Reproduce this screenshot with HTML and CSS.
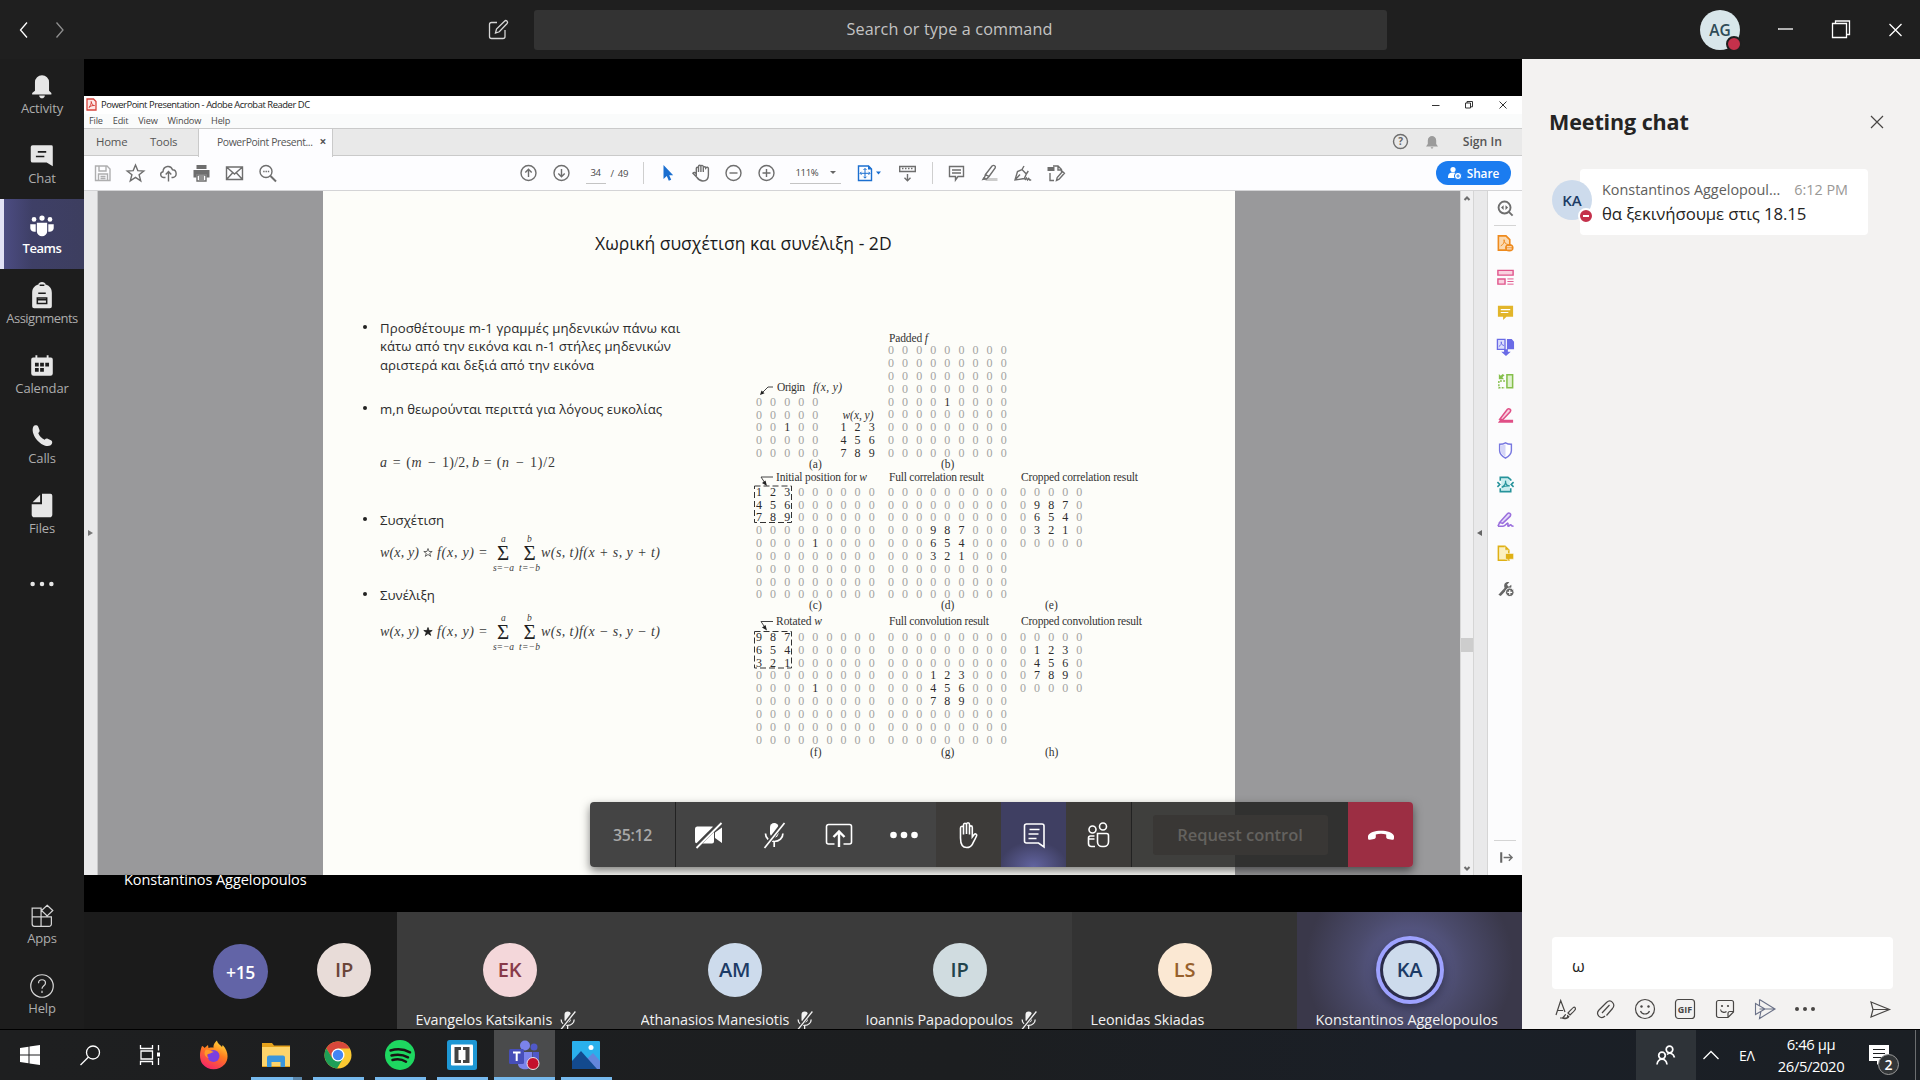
FILE: index.html
```html
<!DOCTYPE html>
<html lang="en">
<head>
<meta charset="utf-8">
<title>Meeting | Microsoft Teams</title>
<link rel="stylesheet" href="styles.css">
</head>
<body>
<svg class="defs" width="0" height="0">
  <defs>
    <symbol id="mic-off" viewBox="0 0 28 28">
      <rect x="10" y="2" width="8.5" height="14.5" rx="4.2" fill="currentColor"/>
      <path d="M5.500 12.500c0 4.500 3.500 8 8.700 8s8.700-3.500 8.700-8M14.200 20.500v5.500" fill="none" stroke="currentColor" stroke-width="1.700"/>
      <path d="M23.800 1.500L4.300 27" stroke="var(--cut)" stroke-width="4.500"/>
      <path d="M24.500 2L4.500 27" stroke="currentColor" stroke-width="1.700"/>
    </symbol>
  </defs>
</svg>

<header class="topbar">
  <div class="nav">
    <svg width="36" height="24" viewBox="0 0 36 24"><path d="M21 4.500l-6.500 7.500 6.500 7.500" class="ln w"/></svg>
    <svg width="36" height="24" viewBox="0 0 36 24"><path d="M14.500 4.500l6.500 7.500-6.500 7.500" class="ln g"/></svg>
  </div>
  <svg class="compose" width="24" height="24" viewBox="0 0 24 24"><path d="M11 4.500H5.500a2 2 0 0 0-2 2V18.500a2 2 0 0 0 2 2H17a2 2 0 0 0 2-2V12M9.500 15l1-4L18.500 3.200a1.500 1.500 0 0 1 2.600 2.300L13.300 13.800z" class="ln"/></svg>
  <div class="search">Search or type a command</div>
  <div class="me">AG<i></i></div>
  <div class="win">
    <svg width="55" height="30" viewBox="0 0 55 30"><path d="M20 14h15" class="ln w"/></svg>
    <svg width="55" height="30" viewBox="0 0 55 30"><path d="M19.500 8.500h14v14h-14zM22.500 8.500V6h14v13.500h-3" class="ln w"/></svg>
    <svg width="55" height="30" viewBox="0 0 55 30"><path d="M21.500 9l12 12M33.500 9l-12 12" class="ln w"/></svg>
  </div>
</header>

<div class="main">
  <nav class="rail">
    <a><svg viewBox="0 0 32 32"><path d="M8.500 21V12a7.500 7.500 0 0 1 15 0v9l2.500 2.500V25H5.500v-1.500zM13 26h6c0 4-6 4-6 0z" class="f"/></svg>Activity</a>
    <a><svg viewBox="0 0 32 32"><path d="M6 4.500h20a1.500 1.500 0 0 1 1.500 1.500V27L21 23H6a2 2 0 0 1-2-2V6.500a2 2 0 0 1 2-2z" class="f"/><path d="M11.500 11.500h9M9.500 16.500h9" stroke="#1d1d1d" stroke-width="1.800"/></svg>Chat</a>
    <a class="on"><svg viewBox="0 -1.5 32 32"><circle cx="16" cy="6" r="2.800"/><circle cx="7.500" cy="7.500" r="2.500"/><circle cx="24.500" cy="7.500" r="2.500"/><path d="M10.500 11h11v9a5.500 5.500 0 0 1-11 0zM3.500 12.500H9.300V20.500c-3 .8-5.800-1-5.800-3.500zM28.500 12.500h-5.800V20.500c3 .8 5.800-1 5.800-3.500z"/></svg>Teams</a>
    <a class="asg"><svg viewBox="0 -1 32 32"><path d="M5.500 11.500C5.500 5.500 10 3 12 3c.5-4 7.500-4 8 0 2 0 6.500 2.500 6.500 8.500V26a2 2 0 0 1-2 2h-17a2 2 0 0 1-2-2z" class="f"/><path d="M13.500 3.500h5M12 12h8" stroke="#1d1d1d" stroke-width="1.600"/><path d="M11 17h10v6H11zM11 19h10" fill="none" stroke="#1d1d1d" stroke-width="1.600"/></svg>Assignments</a>
    <a><svg viewBox="0 -1 32 32"><path d="M7.500 6h1.500V3.500h2V6h10V3.500h2V6h2.500a2 2 0 0 1 2 2v15a2.500 2.500 0 0 1-2.500 2.500h-18A2.500 2.500 0 0 1 4.500 23V8a2 2 0 0 1 2-2z" class="f"/><path d="M8.500 11.500h4v4h-4zM14 11.500h4v4h-4zM19.500 11.500h4v4h-4zM8.500 17h4v4h-4zM14 17h4v4h-4z" fill="#1d1d1d"/></svg>Calendar</a>
    <a><svg viewBox="0 0 32 32"><path d="M7 5.500c1-1 4-1.500 5 .5l1.300 3.500c.5 1.500-.3 2.500-1.300 3.300 1.200 3.500 3.700 5.800 6.800 7.200 1-1 2-1.600 3.300-1.100l3.400 1.600c2.500 1.300 1.300 4.500-.7 5.700C15.500 29.500 2.300 13.500 7 5.500z" class="f"/></svg>Calls</a>
    <a><svg viewBox="0 0 32 32"><path d="M16 3h9a2 2 0 0 1 2 2v20a3 3 0 0 1-3 3H8a3 3 0 0 1-3-3V14h11z" class="f"/><path d="M14 4v8H6z" class="f"/></svg>Files</a>
    <a class="dots"><svg viewBox="0 0 32 32"><circle cx="6" cy="16" r="2.400"/><circle cx="16" cy="16" r="2.400"/><circle cx="26" cy="16" r="2.400"/></svg></a>
    <span class="grow"></span>
    <a><svg viewBox="0 0 32 32"><path d="M5.500 7.500H15v9.500H5.500zM5.500 17H15v10H8a2.500 2.500 0 0 1-2.500-2.500zM15 17h11v7.500a2.500 2.500 0 0 1-2.500 2.500H15zM21.500 4.500l6 5.700-6 5.700-6-5.700z" class="ln"/></svg>Apps</a>
    <a><svg viewBox="0 0 32 32"><circle cx="16" cy="16" r="12" class="ln"/><path d="M12.300 13c0-5 7.400-4.700 7.400-.3 0 3-3.700 3-3.700 6.300M16 21v2.500" class="ln"/></svg>Help</a>
  </nav>

  <section class="stage">
    <div class="acrobat">
      <div class="a-title">
        <svg width="11" height="13" viewBox="0 0 11 13"><path d="M1 1h6.500L10 3.500V12H1z" fill="#fde8e6" stroke="#d8443c" stroke-width="1.300"/><path d="M3 9.500C5 7 5.500 5 5.200 3.500 5.500 6 7 7.500 8.500 7.500 6.500 7.300 4.500 8 3 9.500z" fill="none" stroke="#d8443c"/></svg>
        <span class="t">PowerPoint Presentation - Adobe Acrobat Reader DC</span>
        <svg class="ctl" width="102" height="14" viewBox="0 0 102 14"><path d="M13 7.500h7.500M46.500 5h5v5h-5zM48 5V3.500h5.500v5.300H51.500M80.500 3.500l7 7M87.500 3.500l-7 7" fill="none" stroke="#333"/></svg>
      </div>
      <div class="a-menu"><span>File</span><span>Edit</span><span>View</span><span>Window</span><span>Help</span></div>
      <div class="a-tabs">
        <span class="home">Home</span><span class="tools">Tools</span>
        <span class="tab">PowerPoint Present...<b>×</b></span>
        <span class="grow"></span>
        <svg width="17" height="17" viewBox="0 0 17 17"><circle cx="8.500" cy="8.500" r="7" class="k"/><text x="8.500" y="12.200" class="q">?</text></svg>
        <svg class="bell" width="14" height="16" viewBox="0 0 14 16"><path d="M1 12.500l1.800-2.500V6.500C2.800 3.500 5 2 7 2s4.200 1.500 4.200 4.500V10L13 12.500zM5.500 13.300h3L7 15z" fill="#9b9b9b"/></svg>
        <span class="sign">Sign In</span>
      </div>
      <div class="a-tools">
        <svg class="ib" viewBox="0 0 33 24"><path d="M9.500 5h11.500l3 3v11.500h-14.500zM13 5v5h7V5M12.500 19v-6h9v6M14.500 15.500h5M14.500 17.500h5" class="k faint"/></svg>
        <svg class="ib" viewBox="0 0 33 24"><path d="M16.500 4l2.300 5.600 6 .4-4.700 3.800 1.600 6-5.200-3.400-5.200 3.400 1.600-6L8.200 10l6-.4z" class="k"/></svg>
        <svg class="ib" viewBox="0 0 33 24"><path d="M13.500 16.500h-2c-3.500-.5-3.800-5-.5-5.700.3-6.300 8-7 9.500-2 4.500 0 5 7 .5 7.700h-1.500M16.500 20.500v-9M13.700 13.500l2.800-3 2.800 3" class="k"/></svg>
        <svg class="ib" viewBox="0 0 33 24"><path d="M11.500 4h10v4h-10zM8.500 9h16v7.500h-3v-3h-10v3h-3z" fill="#6e6e6e"/><path d="M12 14h9v6h-9zM14 16h5M14 18h5" class="k"/></svg>
        <svg class="ib" viewBox="0 0 33 24"><path d="M8.500 6h16v12.500h-16zM8.500 6l8 7 8-7M8.500 18.500l6-6.500M24.500 18.500l-6-6.500" class="k"/></svg>
        <svg class="ib" viewBox="0 0 33 24"><circle cx="15" cy="10.500" r="6" class="k"/><path d="M19.500 15l5.500 5.500" class="k b"/><path d="M12.200 10.500h1.400M14.500 10.500h1.400M16.800 10.500h1.400" class="k"/></svg>
        <svg class="ib up" viewBox="0 0 33 24"><circle cx="16.500" cy="12" r="7.500" class="k"/><path d="M16.500 16V8.500M13.300 11.500l3.200-3.300 3.200 3.300" class="k"/></svg>
        <svg class="ib" viewBox="0 0 33 24"><circle cx="16.500" cy="12" r="7.500" class="k"/><path d="M16.500 8v7.500M13.300 12.500l3.200 3.300 3.200-3.300" class="k"/></svg>
        <span class="field pg">34</span><span class="of">/&nbsp; 49</span>
        <i class="sep"></i>
        <svg class="ib" viewBox="0 0 33 24"><path d="M12.500 4v14l3.300-3 2 4.800 2.400-1-2-4.600h4z" fill="#1b6fd0"/></svg>
        <svg class="ib" viewBox="0 0 33 24"><path d="M12.300 15V7.500c0-1.700 2.200-1.700 2.200 0M14.500 11V5.500c0-1.700 2.400-1.700 2.400 0V11M16.900 11V5.500c0-1.700 2.400-1.300 2.400.3V11M19.300 11V6.800c0-1.500 2.400-1.400 2.400.2 1-1.300 2.700-1 2.700.5V14c0 3.500-2 6-5.500 6-3.300 0-4.500-1.500-5.900-3.500L8.900 12.200c1-1.200 2.300-.8 3.400.8" class="k"/></svg>
        <svg class="ib" viewBox="0 0 33 24"><circle cx="16.500" cy="12" r="7.500" class="k"/><path d="M12.500 12h8" class="k"/></svg>
        <svg class="ib" viewBox="0 0 33 24"><circle cx="16.500" cy="12" r="7.500" class="k"/><path d="M12.500 12h8M16.500 8v8" class="k"/></svg>
        <span class="field zm">111%<b></b></span>
        <svg class="ib fit" viewBox="0 0 33 24"><path d="M9.500 5h10l3 3v11.500h-13z" fill="none" stroke="#1b6fd0" stroke-width="1.400"/><path d="M19 4.500v4h4zM27 10.500h5l-2.500 3z" fill="#1b6fd0"/><path d="M16 7.500v9.500M11.300 12.300h9.500M14.500 9L16 7.500 17.500 9M14.500 15.700L16 17.200l1.500-1.500M12.500 10.800L11 12.300l1.500 1.500M19.500 10.800l1.500 1.500-1.500 1.500" fill="none" stroke="#1b6fd0"/></svg>
        <svg class="ib rul" viewBox="0 0 33 24"><path d="M8.700 5.500h15.600v5H8.700zM16.500 13v6.500M13.500 16.800l3 3 3-3" class="k"/><path d="M11 7.500h11" class="k" stroke-dasharray="1.500 1.500"/></svg>
        <i class="sep s2"></i>
        <svg class="ib" viewBox="0 0 33 24"><path d="M9.500 5.500h14v10h-5.500l-2.500 3.500v-3.500h-6zM12 9h9M12 12h9" class="k"/></svg>
        <svg class="ib" viewBox="0 0 33 24"><path d="M12.500 17h12v3h-12z" fill="#ccc"/><path d="M12.500 13.500l6.500-8.500c2-1.500 4 .3 3.200 2l-6.200 8.500zM12.500 13.500l-1.500 4.500h2.500l2.500-2.500" class="k"/><path d="M8.500 19.500l2-3.500 3 2z" fill="#6e6e6e"/></svg>
        <svg class="ib" viewBox="0 0 33 24"><path d="M9 19l2.500-8.500 4.500-2 4.300 4.500-2 4.500zM9 19l5-5.500M16 8.500l2-3.500M20.300 13l2-3M19 19l1.500-2 1 2 1.200-1.500 1 1.500h1.500" class="k"/></svg>
        <svg class="ib" viewBox="0 0 33 24"><path d="M8.500 6h7v4h-7z" fill="#6e6e6e"/><path d="M14 5h5l3.500 3.500M19 5v4h3.500v3M11 12v7.500h4M17.500 19.500l.7-3 5.300-6 1.900 1.700-5.300 6z" class="k"/></svg>
        <span class="share"><svg width="14" height="14" viewBox="0 0 14 14"><circle cx="5" cy="3.500" r="2.600" fill="#fff"/><path d="M0 12c0-5 2-5.500 5-5.500 2 0 3 .5 3.500 1.500L7 12z" fill="#fff"/><circle cx="10" cy="10" r="3.600" fill="#fff" stroke="#1b7cf0"/><path d="M8.300 10h3.400M10 8.300v3.400" stroke="#1b7cf0"/></svg>Share</span>
      </div>
      <div class="a-body">
        <div class="fold"><i></i></div>
        <div class="desk">
          <article class="slide">
            <h1>Χωρική συσχέτιση και συνέλιξη - 2D</h1>
            <div class="cols">
              <ul>
                <li class="p1"><span class="l1">Προσθέτουμε m-1 γραμμές μηδενικών πάνω και</span><br><span>κάτω από την εικόνα και n-1 στήλες μηδενικών</span><br>αριστερά και δεξιά από την εικόνα</li>
                <li class="p2">m,n θεωρούνται περιττά για λόγους ευκολίας</li>
                <li class="eq m1"><svg width="200" height="24"><text x="0" y="17" textLength="31"><tspan class="it">a</tspan> = (</text><text x="31.500" y="17" class="it">m</text><text x="48" y="17">−</text><text x="62" y="17" textLength="27">1)/2,</text><text x="92" y="17" textLength="37"><tspan class="it">b</tspan> = (<tspan class="it">n</tspan></text><text x="136" y="17">−</text><text x="150" y="17" textLength="25">1)/2</text></svg></li>
                <li class="p3">Συσχέτιση</li>
                <li class="eq"><svg width="290" height="45"><g class="it"><text x="0" y="27" textLength="39">w(x, y)</text><text x="57" y="27" textLength="37">f(x, y)</text><text x="161" y="27" textLength="119">w(s, t)f(x + s, y + t)</text></g><text x="99" y="27">=</text><path d="M48 18.500l1.100 3h3.100l-2.500 1.900 1 3-2.700-1.900-2.700 1.900 1-3-2.500-1.900h3.100z" fill="none" stroke="#444" stroke-width=".8"/><g class="sg"><text x="117" y="30">Σ</text><text x="143.500" y="30">Σ</text></g><g class="it sm"><text x="121" y="12">a</text><text x="147" y="12">b</text><text x="113" y="41" textLength="21">s=−a</text><text x="139" y="41" textLength="21">t=−b</text></g></svg></li>
                <li class="p4">Συνέλιξη</li>
                <li class="eq m3"><svg width="290" height="45"><g class="it"><text x="0" y="27" textLength="39">w(x, y)</text><text x="57" y="27" textLength="37">f(x, y)</text><text x="161" y="27" textLength="119">w(s, t)f(x − s, y − t)</text></g><text x="99" y="27">=</text><path d="M48 18.500l1.100 3h3.100l-2.500 1.900 1 3-2.700-1.900-2.700 1.900 1-3-2.500-1.900h3.100z" fill="#222" stroke="#222" stroke-width=".8"/><g class="sg"><text x="117" y="30">Σ</text><text x="143.500" y="30">Σ</text></g><g class="it sm"><text x="121" y="12">a</text><text x="147" y="12">b</text><text x="113" y="41" textLength="21">s=−a</text><text x="139" y="41" textLength="21">t=−b</text></g></svg></li>
              </ul>
              <svg class="fig" id="fig" width="420" height="460" viewBox="0 0 420 460">
                <g class="lab">
                  <text x="149" y="32" textLength="39">Padded <tspan class="it">f</tspan></text>
                  <text x="37" y="81" textLength="28">Origin</text><text x="73" y="81" textLength="29" class="it">f(x, y)</text>
                  <text x="102.500" y="109" textLength="31" class="it">w(x, y)</text>
                  <text x="69" y="158">(a)</text><text x="201" y="158">(b)</text>
                  <text x="36" y="171" textLength="91">Initial position for <tspan class="it">w</tspan></text>
                  <text x="149" y="171" textLength="95">Full correlation result</text>
                  <text x="281" y="171" textLength="117">Cropped correlation result</text>
                  <text x="69" y="299">(c)</text><text x="201" y="299">(d)</text><text x="305" y="299">(e)</text>
                  <text x="36" y="315" textLength="46">Rotated <tspan class="it">w</tspan></text>
                  <text x="149" y="315" textLength="100">Full convolution result</text>
                  <text x="281" y="315" textLength="121">Cropped convolution result</text>
                  <text x="70" y="446">(f)</text><text x="201" y="446">(g)</text><text x="305" y="446">(h)</text>
                </g>
                <path d="M33 77h-5l-6 6M33 167H21l4 6M33 311.500H21l4 6" fill="none" stroke="#444"/>
                <path d="M20 85l1.500-4.500 3 2.800zM27 176l-5-3 3.500-2.500zM27 320.500l-5-3 3.500-2.500z" fill="#222"/>
                <path d="M14.500 176h37v36.500h-37zM14.500 321.500h37V358h-37z" fill="none" stroke="#333" stroke-dasharray="6 3"/>
              </svg>
            </div>
          </article>
        </div>
        <div class="sb"><svg width="12" height="12" viewBox="0 0 12 12"><path d="M3.500 8L6 5.500 8.500 8" class="k b"/></svg><i></i><svg width="12" height="12" viewBox="0 0 12 12"><path d="M3.500 5L6 7.500 8.500 5" class="k b"/></svg></div>
        <div class="fold r"><i></i></div>
        <div class="side">
          <svg viewBox="0 0 20 20"><circle cx="9" cy="9" r="6.300" class="k b"/><path d="M13.500 13.500l4 4" class="k b"/><path d="M8 6.500v5L5.300 9zM10 6.500v5L12.700 9z" fill="#666"/></svg>
          <hr>
          <svg viewBox="0 0 20 20"><path d="M2.500 2h8l4 4v11h-12z" fill="#fbd9b0" stroke="#ee8a1d" stroke-width="1.700"/><path d="M5 12.500c3-1.500 4-4 3.500-6.500 0 3 1.500 4.500 4 5" fill="none" stroke="#ee8a1d"/><ellipse cx="14" cy="14.500" rx="4.500" ry="4" fill="#ee8a1d"/><path d="M11.500 13.500h5M11.500 15.700h5" stroke="#fff"/></svg>
          <svg viewBox="0 0 20 20"><path d="M2 2.500h16v5H2zM2 11.500h7.500v5.500H2z" fill="#f9d2e0" stroke="#e0558c" stroke-width="1.500"/><path d="M12 11.500h6.500M12 14.200h6.500M12 17h6.500" stroke="#e0558c"/></svg>
          <svg viewBox="0 0 20 20"><path d="M2 3h16v11.500h-7L7.500 18v-3.500H2z" fill="#e2b52a"/><path d="M5 7h10M5 10h8" stroke="#fff" stroke-width="1.200"/></svg>
          <svg viewBox="0 0 20 20"><path d="M1.500 2.500h8v10.500h-8z" fill="#dddffc" stroke="#6a6be6" stroke-width="1.400"/><path d="M11.500 2h5l2.500 3v8h-7.500zM8.500 13h4v2.500h3L10.500 20l-5-4.500h3z" fill="#6a6be6"/><path d="M3 10c2-1 3-3 2.500-5 0 2.500 1 3.500 3 4" fill="none" stroke="#6a6be6"/></svg>
          <svg viewBox="0 0 20 20"><path d="M11.500 3h6v13.500h-6z" fill="#e0f2d0" stroke="#85bf4b" stroke-width="1.600"/><path d="M9.500 9.500H3v7h6.500" fill="none" stroke="#85bf4b" stroke-width="1.500" stroke-dasharray="2 1.300"/><path d="M3 2v5.500h5.500L6.700 5.600 9 3.500 7 2 5 4z" fill="#85bf4b"/></svg>
          <svg viewBox="0 0 20 20"><path d="M4 14l8-10.500c1.500-1.500 4.500 0 3 2.500L7 14.500z" fill="#f9d2e0" stroke="#e04f86" stroke-width="1.600"/><path d="M2 17.500l3-4 3 1h10v3z" fill="#e04f86"/></svg>
          <svg viewBox="0 0 20 20"><path d="M10 2c2 1.200 4 1.500 6.200 1.500V10c0 4-3 6.300-6.200 8-3.200-1.700-6.200-4-6.200-8V3.500C6 3.500 8 3.200 10 2z" fill="#fff" stroke="#7878e0" stroke-width="1.500"/><path d="M10 3.500v13c-3-1.500-5-3.500-5-6.500V4.700c2 0 3.500-.4 5-1.200z" fill="#d5d6f7"/></svg>
          <svg viewBox="0 0 20 20"><path d="M5.500 3.500h7l2 2v11h-9z" fill="#c9edef"/><path d="M4.500 6V2.500h8L15.500 5v1M15.500 14v3.500h-11V14M1.500 7.500L4 10l-2.500 2.500M18.500 7.500L16 10l2.500 2.500" fill="none" stroke="#26939b" stroke-width="1.700"/><path d="M6 13c3-1.500 4.500-4 4-7 0 4 2 5.500 4.500 5.500-3-.2-6 .2-8.500 1.500z" fill="none" stroke="#26939b" stroke-width="1.300"/></svg>
          <svg viewBox="0 0 20 20"><path d="M4 13l8-9c1.500-1.500 4.500-.5 3 2.500L7 14z" fill="#e6dbfb" stroke="#9a6fdd" stroke-width="1.600"/><path d="M2 17h5.500c3 0 4-4 5-3s-1 3 .5 3 1.500-2 2.500-1.500 0 1.500 3 1.500M2 17l2-4" fill="none" stroke="#9a6fdd" stroke-width="1.600"/></svg>
          <svg viewBox="0 0 20 20"><path d="M2.500 2.500h7l4 4v10.500h-11z" fill="#fbf0c0" stroke="#dfb015" stroke-width="1.600"/><path d="M9.500 2.500v4h4M10 10h8.500v6h-4L12 18v-2h-2z" fill="#dfb015" stroke="#fff" stroke-width=".5"/></svg>
          <svg viewBox="0 0 20 20"><path d="M2.500 16.500L9 9.500C7.500 5 10.500 2.500 14 3.500L11.500 6l2 2.200L16 6c1 3-1 5.500-4.500 5L5 18z" fill="#666"/><circle cx="14.500" cy="14" r="4.500" fill="#666" stroke="#fff"/><path d="M12 14h5M14.500 11.500v5" stroke="#fff" stroke-width="1.300"/></svg>
          <span class="grow"></span>
          <hr>
          <svg class="last" viewBox="0 0 20 20"><path d="M5.500 4.500v11" stroke="#666" stroke-width="2.200"/><path d="M8 10h9M13.500 6.500l3.500 3.500-3.500 3.500" class="k"/></svg>
        </div>
      </div>
    </div>
    <div class="caller">Konstantinos Aggelopoulos</div>

    <div class="strip">
      <div class="over"><span class="av more">+15</span><span class="av ip1">IP</span></div>
      <div class="tile"><span class="av ek">EK</span><p>Evangelos Katsikanis<svg width="21" height="21"><use href="#mic-off"/></svg></p></div>
      <div class="tile"><span class="av am">AM</span><p>Athanasios Manesiotis<svg width="21" height="21"><use href="#mic-off"/></svg></p></div>
      <div class="tile"><span class="av ip2">IP</span><p>Ioannis Papadopoulos<svg width="21" height="21"><use href="#mic-off"/></svg></p></div>
      <div class="tile dim"><span class="av ls">LS</span><p>Leonidas Skiadas</p></div>
      <div class="tile talk"><span class="av ka">KA</span><p>Konstantinos Aggelopoulos</p></div>
    </div>

    <div class="callbar">
      <span class="time">35:12</span>
      <span class="cb"><svg viewBox="0 0 28 28"><path d="M2 5.500h15a2 2 0 0 1 2 2v13a2 2 0 0 1-2 2H2.500a2.500 2.500 0 0 1-2.500-2.500v-12a2.500 2.500 0 0 1 2-2.500zM20 11.500l7-5v15.500l-7-5z" fill="#fff"/><path d="M25.500 1.500L1 26" stroke="#444" stroke-width="4.500"/><path d="M26.500 2L1.500 27" stroke="#fff" stroke-width="1.800"/></svg></span>
      <span class="cb m"><svg><use href="#mic-off"/></svg></span>
      <span class="cb"><svg viewBox="0 0 28 28"><path d="M9.500 23H3.500a2 2 0 0 1-2-2V5.500a2 2 0 0 1 2-2h21a2 2 0 0 1 2 2V21a2 2 0 0 1-2 2h-6" fill="none" stroke="#fff" stroke-width="1.600"/><path d="M14 26V11M8.500 16L14 10.500 19.500 16" fill="none" stroke="#fff" stroke-width="2.400"/></svg></span>
      <span class="cb"><svg viewBox="0 0 28 28"><circle cx="3.500" cy="14" r="3.300" fill="#fff"/><circle cx="14" cy="14" r="3.300" fill="#fff"/><circle cx="24.500" cy="14" r="3.300" fill="#fff"/></svg></span>
      <span class="cb d"><svg viewBox="3 0 28 28"><path d="M8.500 17V7c0-2.300 3-2.300 3 0v6.500V4c0-2.300 3-2.300 3 0v9V3.500c0-2.300 3-2.300 3 0V13.500V6.500c0-2.200 2.800-2.200 2.800 0V16l1.900-2.500c1.300-1.300 3 0 2.400 1.300-1.200 3-3 6-4 8-1.500 3-3.400 3.700-5.900 3.700-4.700 0-6.200-4-6.200-9.500z" fill="none" stroke="#fff" stroke-width="1.600"/></svg></span>
      <span class="cb c"><svg viewBox="0 0 28 28"><path d="M6 3h16a2 2 0 0 1 2 2v21l-5.500-4H6.500a2 2 0 0 1-2-2V5a2 2 0 0 1 2-2zM9.500 8.500h10M8.500 13h10M8.500 17.500h8" fill="none" stroke="#fff" stroke-width="1.600"/></svg></span>
      <span class="cb d"><svg viewBox="1 0 28 28"><circle cx="8.500" cy="8.500" r="3.500" class="o"/><circle cx="19" cy="5.500" r="3.500" class="o"/><path d="M13.500 12.500h9a2 2 0 0 1 2 2V21a4.500 4.500 0 0 1-4.500 4.500h-2a4.500 4.500 0 0 1-4.500-4.500zM10.500 15h-4a2 2 0 0 0-2 2v1h6M4.500 18v4.500a3 3 0 0 0 3 3H11" class="o"/></svg></span>
      <span class="req"><b>Request control</b></span>
      <span class="end"><svg viewBox="0 0 28 28"><path d="M1 15C3 8 25 8 27 15v2c0 1.500-.8 2-2 1.800l-4-.8c-1.200-.2-1.800-1-1.800-2v-2.500c-3-1-7.400-1-10.400 0V16c0 1-.6 1.800-1.800 2l-4 .8C1.800 19 1 18.500 1 17z" fill="#fff"/></svg></span>
    </div>
  </section>

  <aside class="chat">
    <div class="c-head"><h2>Meeting chat</h2><svg width="14" height="14" viewBox="0 0 14 14"><path d="M1 1l12 12M13 1L1 13" class="ln d"/></svg></div>
    <div class="msg">
      <span class="who">KA<i></i></span>
      <div class="card"><div class="meta"><span>Konstantinos Aggelopoul...</span><time>6:12 PM</time></div><p>θα ξεκινήσουμε στις 18.15</p></div>
    </div>
    <span class="grow"></span>
    <div class="input">ω</div>
    <div class="acts">
      <svg viewBox="0 0 24 24"><path d="M3 18L7.700 3.500 12 15M4.500 13.500h5.500M7 21h6c1.500 0 2-1.500 1.500-3M22 10.500c-1-1-1.500-.5-7 5.500l2 2c6-5.500 6-6 5-7.500zM13 17.500c-2 .5-1.500 3-4 3.500 3 1.500 6.500 0 7-2" class="ln d"/></svg>
      <svg viewBox="0 0 24 24"><path d="M13.500 18.500l6-7c3.500-4.500-1.500-10-6-6L6 13c-4 4.500 2 10.500 6 6M9 16l7.500-8" class="ln d"/></svg>
      <svg viewBox="0 0 24 24"><circle cx="12" cy="12" r="9.500" class="ln d"/><path d="M7.500 14c1.500 4 7.500 4 9 0" class="ln d"/><circle cx="8.500" cy="9.500" r="1.200"/><circle cx="15.500" cy="9.500" r="1.200"/></svg>
      <svg viewBox="0 0 24 24"><rect x="2.500" y="2.500" width="19" height="19" rx="3" class="ln d"/><text x="12" y="15.500" class="gif">GIF</text></svg>
      <svg viewBox="0 0 24 24"><path d="M5.500 3.500h13a2 2 0 0 1 2 2V15L15 20.500H5.500a2 2 0 0 1-2-2v-13a2 2 0 0 1 2-2zM20.500 14.500H17a2 2 0 0 0-2 2v4M7.500 12.500c.5 3 4 3.500 6 2" class="ln d"/><circle cx="9" cy="9" r="1.100"/><circle cx="15" cy="9" r="1.100"/></svg>
      <svg viewBox="0 0 24 24"><path d="M6.500 2.500L22 12 6.500 21.500l1.500-7.500M6.500 2.500V9M6.500 12H22M2.500 6.500L12 12l-9.500 5.500v-11z" class="ln p"/></svg>
      <svg viewBox="0 0 24 24"><circle cx="4" cy="12" r="2"/><circle cx="12" cy="12" r="2"/><circle cx="20" cy="12" r="2"/></svg>
      <span class="grow"></span>
      <svg viewBox="0 0 24 24"><path d="M3 5l18.500 7.500L3 20l2-7.500zM5 12.500h16" class="ln d"/></svg>
    </div>
  </aside>
</div>

<footer class="taskbar">
  <span class="tb s"><svg width="20" height="20" viewBox="0 0 20 20"><path d="M0 3l8.500-1.200v7.700H0zM9.500 1.600L20 0v9.500H9.500zM0 10.500h8.500v7.700L0 17zM9.500 10.500H20V20L9.500 18.400z" fill="#fff"/></svg></span>
  <span class="tb s"><svg width="22" height="22" viewBox="0 0 22 22"><circle cx="14" cy="8.500" r="6.500" class="ln w"/><path d="M9.500 13L1.500 21" class="ln w"/></svg></span>
  <span class="tb s"><svg width="22" height="22" viewBox="0 0 22 22"><path d="M1.500 1v3.500h12V1M1.500 21v-3.500h12V21M2 7h11.500v8H2zM19.500 1v5.500M19.500 14v7" class="ln w"/><path d="M18 8.500h3v4h-3z" fill="#fff"/></svg></span>
  <span class="tb ff"><svg width="30" height="30" viewBox="0 0 30 30"><defs><linearGradient id="fg" x1=".8" y1="0" x2=".3" y2="1"><stop offset="0" stop-color="#ffe23c"/><stop offset=".45" stop-color="#ff7a1f"/><stop offset="1" stop-color="#f5236a"/></linearGradient></defs><path d="M3 6c1 0 2 1 2.500 2L9 5l.5 3c2-.5 4-.5 5-.3C14 5 16 2 18 .5c.3 3 3.500 4.500 5 6.500l.7-2C30 12 29.500 19 26 24c-6 7-17 7-22.500 0C0 19 .5 12 3 6z" fill="url(#fg)"/><circle cx="14.500" cy="16" r="6" fill="#7a3fe0"/><path d="M7 9.500c3 0 5 1.500 8 2.500-3 .5-4 2-6 2s-1 3 1 4c-4-.5-6-5-3-8.500z" fill="#ff9a2a"/></svg></span>
  <span class="tb run two"><svg width="28" height="28" viewBox="0 0 28 28"><path d="M0 2h10l2 2.500h16V26H0z" fill="#e5a21c"/><path d="M0 6h28v19H0z" fill="#fdd46b"/><path d="M5 26v-9.500a2 2 0 0 1 2-2h14a2 2 0 0 1 2 2V26h-4.500v-5h-9v5z" fill="#3a96dd"/></svg></span>
  <span class="tb run"><svg width="28" height="28" viewBox="0 0 28 28"><circle cx="14" cy="14" r="13.500" fill="#fbc932"/><path d="M2.300 7.200A13.500 13.500 0 0 1 25.700 7.500H14L8 17z" fill="#d9483b"/><path d="M2.300 7.200A13.500 13.500 0 0 0 13 27.500L19 17.500 8.500 17.500z" fill="#1e9f57"/><circle cx="14" cy="14" r="6.500" fill="#fff"/><circle cx="14" cy="14" r="5.200" fill="#4285f4"/></svg></span>
  <span class="tb run"><svg width="30" height="30" viewBox="0 0 30 30"><circle cx="15" cy="15" r="15" fill="#1ed760"/><path d="M5.500 10.500c7-2 14-1.200 19.500 1.800M6.500 15.500c6-1.500 11.500-1 16.500 1.800M7.500 20c5-1.200 9.500-.8 13.500 1.700" fill="none" stroke="#191414" stroke-width="2.500" stroke-linecap="round"/></svg></span>
  <span class="tb run"><svg width="30" height="30" viewBox="0 0 30 30"><rect width="30" height="30" rx="2.500" fill="#1e97d4"/><rect x="4" y="4.500" width="22" height="21" rx="1" fill="#fff"/><path d="M14 7H7.500v16H14v-3h-2.500V10H14zM16 7h6.500v16H16v-3h2.500V10H16z" fill="#444"/></svg></span>
  <span class="tb run act"><svg width="32" height="30" viewBox="0 0 32 30"><circle cx="17" cy="5.500" r="5" fill="#7b83eb"/><circle cx="26" cy="7" r="3.500" fill="#5059c9"/><path d="M10 12h14v12c0 7-14 7-14 0z" fill="#7b83eb"/><path d="M24.500 12H31v9c0 3-3 5-6.500 4z" fill="#5059c9"/><rect x="1" y="9" width="15" height="15" rx="1.500" fill="#464eb8"/><path d="M5 12.500h7.500M8.700 12.500v8.500" stroke="#fff" stroke-width="2"/><circle cx="25" cy="23.500" r="6" fill="#c4112d" stroke="#e8e8e8"/></svg></span>
  <span class="tb run"><svg width="28" height="28" viewBox="0 0 28 28"><rect width="28" height="28" rx="1" fill="#2ab0ec"/><path d="M12 21l9-9 7 8v8H12z" fill="#6486dc"/><path d="M0 20l9-10 16 18H0z" fill="#134a8e"/><circle cx="19" cy="6.500" r="2.500" fill="#fff"/></svg></span>
  <span class="grow"></span>
  <span class="ppl"><svg width="20" height="20" viewBox="0 0 20 20"><circle cx="13.500" cy="4.500" r="3.300" class="ln w2"/><circle cx="6" cy="10.500" r="3.300" class="ln w2"/><path d="M1 19.500c1-7 9-7 10 0M11 9.500c2.500-2.500 6.500-1 7.500 3" class="ln w2"/></svg></span>
  <svg class="chev" width="16" height="10" viewBox="0 0 16 10"><path d="M.5 9L8 1.500 15.500 9" class="ln w"/></svg>
  <span class="lang">ΕΛ</span>
  <span class="clock"><span>6:46 μμ</span><span>26/5/2020</span></span>
  <span class="notif"><svg width="20" height="20" viewBox="0 0 20 20"><path d="M0 0h20v16h-8l-4 4v-4H0z" fill="#fff"/><path d="M4 4.500h12M4 8.500h12M4 12.500h9" stroke="#1c1e20"/></svg><i>2</i></span>
  <i class="edge"></i>
</footer>
<script src="figure.js"></script>
</body>
</html>
```
FILE: styles.css
```css
* { box-sizing: border-box; }
body { margin: 0; width: 1920px; height: 1080px; overflow: hidden; display: flex; flex-direction: column; background: #000; font-family: "Open Sans", "Noto Sans", sans-serif; }
h1, h2, p, ul { margin: 0; padding: 0; font-weight: 400; }
.defs { position: absolute; }
.grow { flex: 1; }
i { font-style: normal; }
svg { flex: none; display: block; }
.ln { fill: none; stroke: #d6d6d6; stroke-width: 1.3; }
.ln.w { stroke: #fff; }
.ln.w2 { stroke: #fff; stroke-width: 1.7; }
.ln.g { stroke: #8f8f8f; }
.ln.d { stroke: #484644; stroke-width: 1.2; }
.ln.p { stroke: #6b7288; stroke-width: 1.1; }
.k { fill: none; stroke: #6e6e6e; stroke-width: 1.4; }
.k.b { stroke-width: 2; }
.k.faint { opacity: .55; }

/* top bar */
.topbar { height: 59px; flex: none; display: flex; align-items: center; background: #1f1f1f; color: #c8c8c8; overflow: hidden; }
.topbar > * { flex: none; }
.nav { display: flex; padding-left: 6px; width: 486px; }
.compose { margin-right: 24px; }
.search { width: 853px; height: 40px; background: #333; border-radius: 3px; font-size: 16.2px; line-height: 39px; text-align: center; padding-right: 22px; letter-spacing: .15px; color: #c4c4c4; }
.me { position: relative; width: 40px; height: 40px; margin-left: 313px; border-radius: 50%; background: #d8e6ea; color: #2f4b57; font-size: 15.5px; font-weight: 600; line-height: 40px; text-align: center; }
.me i { position: absolute; right: -2px; bottom: -2px; width: 16px; height: 16px; border-radius: 50%; background: #c4314b; border: 2px solid #1f1f1f; }
.win { display: flex; margin-left: 17.5px; }

.main { height: 970px; flex: none; display: flex; }

/* app rail */
.rail { width: 84px; flex: none; display: flex; flex-direction: column; background: #1d1d1d; }
.rail a { height: 70px; flex: none; display: flex; flex-direction: column; align-items: center; padding-top: 12px; font-size: 13px; line-height: 18px; letter-spacing: -.15px; color: #adadad; }
.rail svg { width: 30px; height: 30px; fill: #e6e6e6; margin-bottom: -2px; }
.rail .ln { fill: none; }
.rail .asg { letter-spacing: -.5px; }
.rail .dots { padding-top: 20px; }
.rail .on { color: #fff; font-weight: 600; letter-spacing: -.4px; border-left: 4px solid #e2e2f6; padding-right: 4px; background: linear-gradient(90deg, #4c4c82, #3e3f66 35%, #3d3e5f); }
.rail .on svg { fill: #fff; }

/* shared window */
.stage { position: relative; width: 1438px; flex: none; background: #000; padding-top: 37px; display: flex; flex-direction: column; }
.acrobat { height: 779px; flex: none; background: #fdfdff; color: #4a4a4a; display: flex; flex-direction: column; }
.a-title { height: 18px; display: flex; align-items: center; padding-left: 2px; font-size: 9.4px; color: #222; letter-spacing: -.44px; background: #fff; line-height: 16px; padding-bottom: 1px; }
.a-title .t { margin-left: 4px; }
.ctl { margin-left: auto; margin-right: 1px; }
.a-menu { height: 14px; display: flex; padding-left: 5px; font-size: 9.2px; line-height: 13px; letter-spacing: -.2px; background: #fafbfb; }
.a-menu span { margin-right: 10px; }
.a-tabs { height: 28px; display: flex; align-items: center; border: solid #cacaca; border-width: 1px 0; background: #e9e9e9; font-size: 11.4px; line-height: 24px; letter-spacing: -.2px; padding-right: 20px; padding-bottom: 1px; color: #555; }
.home { width: 66px; padding-left: 12px; }
.tools { width: 48px; }
.tab { width: 135px; height: 28px; margin-bottom: -3px; background: #fdfdff; border-left: 1px solid #cacaca; border-right: 1px solid #cacaca; padding: 0 6px 0 18px; line-height: 26px; font-size: 10.4px; display: flex; justify-content: space-between; letter-spacing: -.4px; white-space: nowrap; }
.tab b { font-size: 12px; line-height: 25px; }
.q { font: 700 10px "Open Sans", sans-serif; text-anchor: middle; fill: #666; }
.bell { margin: 0 24px 0 15.5px; }
.sign { font-size: 12.2px; letter-spacing: 0; font-weight: 600; }
.a-tools { height: 35px; display: flex; align-items: center; border-bottom: 1px solid #d4d4d6; padding-left: 2px; font-size: 9.6px; letter-spacing: -.4px; }
.ib { width: 33px; height: 24px; }
.up { margin-left: 227.5px; }
.field { border-bottom: 1px solid #c4c4c4; height: 22px; line-height: 21px; text-align: center; margin-left: 8px; }
.pg { width: 20px; }
.of { width: 29px; padding-left: 5px; }
.sep { width: 1px; height: 22px; background: #cfcfcf; margin: 0 7px 0 8px; }
.s2 { margin-left: 8px; }
.zm { width: 51px; display: flex; padding-left: 6px; align-items: center; margin-left: 7px; }
.zm b { border: 3px solid transparent; border-top: 3.5px solid #666; border-bottom: 0; margin-left: 12px; }
.fit { margin-left: 8px; }
.rul { margin-left: 9px; }
.share { margin-left: auto; margin-right: 11px; width: 75px; height: 24px; border-radius: 12px; background: #1b7cf0; color: #fff; font-size: 11.8px; font-weight: 600; letter-spacing: 0; display: flex; align-items: center; justify-content: center; gap: 5px; }
.a-body { flex: 1; display: flex; }
.fold { width: 14px; flex: none; background: #e9e9ea; border-right: 1px solid #c9c9ca; display: flex; align-items: center; }
.fold i { border: 3.5px solid transparent; border-left: 5px solid #777; border-right: 0; margin-left: 4px; }
.fold.r { border-left: 1px solid #d5d5d5; border-right: 0; }
.fold.r i { border: 3.5px solid transparent; border-right: 5px solid #666; border-left: 0; margin-left: 3px; }
.desk { width: 1362px; flex: none; background: #99999b; padding-left: 225px; display: flex; }
.slide { width: 912px; background: #fdfdf9; color: #222; }
.slide h1 { margin-top: 39px; margin-bottom: 1px; padding-left: 272px; font-size: 17.55px; line-height: 26px; color: #1b1b1b; white-space: nowrap; }
.cols { display: flex; }
.cols ul { width: 417px; padding: 62px 0 0 57px; font-size: 13.2px; letter-spacing: .02px; line-height: 18.3px; white-space: nowrap; list-style: none; color: #2b2b2b; flex: none; }
.cols li { position: relative; }
.cols li::before { content: ""; position: absolute; left: -17px; top: 6px; width: 4px; height: 4px; border-radius: 50%; background: #222; }
.cols .eq::before { display: none; }
.l1 { letter-spacing: .08px; }
.p2 { margin-top: 26px; }
.m1 { margin-top: 32px; }
.cols .p3 { margin-top: 37px; margin-bottom: 1px; }
.p4 { margin-top: 11px; }
.m3 { margin-top: 4px; }
.eq { font: 14px "Liberation Serif", serif; fill: #3a3a3a; letter-spacing: 0; }
.eq .sm { font-size: 9.5px; }
.eq .sg { font-size: 21px; fill: #222; }
.it { font-style: italic; }
.fig { margin-top: 53px; font: 12px "Liberation Serif", serif; fill: #a3a3a1; }
.fig .lab { fill: #333; font-size: 11.5px; }
.fig .n { text-anchor: middle; }
.fig .n .k1 { fill: #2c2c2c; }
.sb { width: 13px; flex: none; background: #f0f0f1; display: flex; flex-direction: column; padding: 1px 0; border-left: 1px solid #d8d8d8; }
.sb i { height: 14px; background: #cdcdcd; margin: 434px 0 0 0; }
.sb svg:last-child { margin-top: auto; }
.side { flex: 1; background: #fcfcfd; border-left: 1px solid #d5d5d5; display: flex; flex-direction: column; align-items: center; padding-top: 8px; }
.side svg { width: 19px; height: 19px; margin-bottom: 15.5px; }
.side hr { width: 22px; height: 1px; border: 0; background: #d4d4d4; margin: -9px 0 8px; }
.side .grow + hr { margin: 0 0 7px; }
.side .last { margin-bottom: 8px; }

.caller { position: absolute; left: 40px; top: 811px; font-size: 14.5px; line-height: 20px; letter-spacing: -.05px; color: #fff; text-shadow: 0 0 2px #000; }

/* participants */
.strip { margin-top: 37px; height: 117px; display: flex; }
.over { width: 313px; background: #1b1b1b; display: flex; align-items: flex-start; padding: 31px 0 0 129px; gap: 49px; }
.av { display: block; width: 54px; height: 54px; border-radius: 50%; font-size: 20px; font-weight: 600; line-height: 54px; text-align: center; letter-spacing: -.3px; }
.more { width: 55px; height: 55px; background: #6264a7; color: #fff; font-size: 17.5px; line-height: 56px; margin-top: 1px; }
.ip1 { background: #e8dcd8; color: #6a4538; }
.tile { width: 225px; background: #3b3b3b; padding-top: 31px; --cut: #3b3b3b; }
.tile .av { margin: 0 auto; }
.tile p { margin: 13px 0 0 18.5px; height: 19px; overflow: hidden; display: flex; gap: 5px; font-size: 14.4px; line-height: 19px; color: #f2f2f2; letter-spacing: -.07px; white-space: nowrap; }
.talk p { letter-spacing: 0; }
.ek { background: #f4d7da; color: #883a49; }
.am { background: #cddbec; color: #1c3b66; }
.ip2 { background: #d0dce0; color: #22434b; }
.ls { background: #fbe8d3; color: #97602b; }
.ka { background: #cddbec; color: #1c3b66; box-shadow: 0 0 0 3px #2b2c4a, 0 0 0 7px #9ea2ff, 0 4px 12px 6px rgba(0,0,0,.45); }
.dim { background: #333; }
.talk { background: radial-gradient(circle at 50% 45%, #63659f 0, #4b4b6c 42%, #3a384a 80%); }

/* call controls */
.callbar { position: absolute; left: 506px; top: 743px; width: 823px; height: 65px; border-radius: 4px; display: flex; color: #fff; box-shadow: 0 4px 10px rgba(0,0,0,.5); --cut: #444; }
.callbar > span { display: flex; align-items: center; justify-content: center; background: #444; }
.callbar .time { width: 86px; border-right: 1px solid #222; font-size: 15.8px; font-weight: 600; letter-spacing: -.3px; border-radius: 4px 0 0 4px; color: #a8a8a8; }
.cb { width: 65px; }
.cb svg, .end svg { width: 28px; height: 28px; }
.callbar .d { background: #3d3b39; }
.callbar .c { background: radial-gradient(ellipse 34px 26px at 50% 100%, #6264a0, #3f3f62); }
.o { fill: none; stroke: #fff; stroke-width: 1.6; }
.callbar .req { width: 217px; border-left: 1px solid #222; background: rgba(32,31,30,.86); }
.req b { width: 175px; height: 40px; border-radius: 3px; background: #393735; color: #64625f; font-size: 16.5px; font-weight: 600; line-height: 40px; text-align: center; letter-spacing: -.05px; }
.callbar .end { width: 65px; background: #9c2e43; border-radius: 0 4px 4px 0; }

/* chat pane */
.chat { flex: 1; background: #f3f2f1; display: flex; flex-direction: column; color: #252423; }
.c-head { display: flex; align-items: center; justify-content: space-between; padding: 48px 36px 0 27px; height: 78px; }
.c-head h2 { font-size: 21.5px; font-weight: 700; line-height: 30px; letter-spacing: -.1px; }
.msg { display: flex; margin-top: 32px; padding-left: 30px; }
.who { position: relative; z-index: 1; margin: 11px -12px 0 0; width: 40px; height: 40px; flex: none; border-radius: 50%; background: #cddbec; color: #1c3b66; font-size: 15px; font-weight: 600; line-height: 40px; text-align: center; }
.who i { position: absolute; right: -2px; bottom: -4px; width: 16px; height: 16px; border-radius: 50%; background: linear-gradient(#fff, #fff) center/6px 2px no-repeat #c4314b; border: 2px solid #fff; }
.card { width: 288px; height: 66px; border-radius: 4px; background: #fff; padding: 10px 20px 0 22px; }
.meta { display: flex; justify-content: space-between; font-size: 14.4px; line-height: 22px; color: #605e5c; letter-spacing: 0; white-space: nowrap; }
.meta time { color: #9a9896; }
.card p { font-size: 16.8px; line-height: 26px; letter-spacing: -.1px; white-space: nowrap; }
.input { margin-left: 30px; width: 341px; height: 52px; border-radius: 4px; background: #fff; padding: 15px 0 0 20px; font-size: 16.5px; line-height: 28px; }
.acts { height: 40px; display: flex; align-items: center; padding: 0 28px 0 31px; gap: 16px; fill: #484644; }
.acts svg { width: 24px; height: 24px; }
.gif { font: 700 9px "Open Sans", sans-serif; text-anchor: middle; }

/* taskbar */
.taskbar { height: 51px; border-top: 1px solid #000; background: linear-gradient(90deg, #1e1f20 0, #1c1e20 50%, #1a1f27 75%, #1b1f24 100%); display: flex; align-items: center; color: #fff; }
.tb { width: 62px; height: 50px; display: flex; align-items: center; justify-content: center; }
.tb.s { width: 60px; }
.tb.ff { width: 65px; padding-left: 3px; }
.run { padding-top: 3px; border-bottom: 3px solid #76b9ed; width: 51px; margin: 0 5.5px; }
.two { border-image: linear-gradient(90deg, #76b9ed 78%, #5a86aa 78%) 3; border-width: 0 0 3px; border-style: solid; }
.act { width: 61px; margin: 0 .5px; background: #4a4b4c; }
.ppl { width: 60px; height: 50px; background: #2e3338; display: flex; align-items: center; justify-content: center; }
.chev { margin-left: 7px; }
.lang { width: 40px; margin-left: 20px; font-size: 14px; letter-spacing: -.4px; }
.clock { width: 66px; margin-left: -1px; display: flex; flex-direction: column; align-items: center; font-size: 14.8px; line-height: 22.5px; letter-spacing: -.4px; white-space: nowrap; }
.notif { position: relative; margin: 0 26px 0 25px; }
.notif i { position: absolute; left: 9px; top: 9px; width: 21px; height: 21px; border-radius: 50%; background: #333638; border: 1px solid #9a9a9a; font-size: 14px; font-weight: 600; line-height: 19px; text-align: center; }
.edge { width: 1px; height: 50px; background: #6c6e70; margin-right: 4px; }
```
FILE: figure.js
```js
// Fills the number grids of the correlation / convolution figure.
// Each grid: left column centre, first row centre, rows of digits.
const z9 = "000000000", z5 = "00000", COL = 14.08, ROW = 12.83;
const grids = [
  [19, 91.7, [z5, z5, "00100", z5, z5]],
  [103.5, 117.3, ["123", "456", "789"]],
  [151, 40.3, [z9, z9, z9, z9, "000010000", z9, z9, z9, z9]],
  [19, 181.7, ["123000000", "456000000", "789000000", z9, "000010000", z9, z9, z9, z9]],
  [151, 181.7, [z9, z9, z9, "000987000", "000654000", "000321000", z9, z9, z9]],
  [283, 181.7, [z5, "09870", "06540", "03210", z5]],
  [19, 327, ["987000000", "654000000", "321000000", z9, "000010000", z9, z9, z9, z9]],
  [151, 327, [z9, z9, z9, "000123000", "000456000", "000789000", z9, z9, z9]],
  [283, 327, [z5, "01230", "04560", "07890", z5]]
];
const fig = document.getElementById("fig");
const NS = "http://www.w3.org/2000/svg";
for (const [x, y, rows] of grids) {
  rows.forEach((row, r) => {
    const t = document.createElementNS(NS, "text");
    t.setAttribute("class", "n");
    t.setAttribute("y", y + r * ROW + 4);
    [...row].forEach((d, c) => {
      const s = document.createElementNS(NS, "tspan");
      s.setAttribute("x", x + c * COL);
      if (d !== "0") s.setAttribute("class", "k1");
      s.textContent = d;
      t.appendChild(s);
    });
    fig.appendChild(t);
  });
}
```
